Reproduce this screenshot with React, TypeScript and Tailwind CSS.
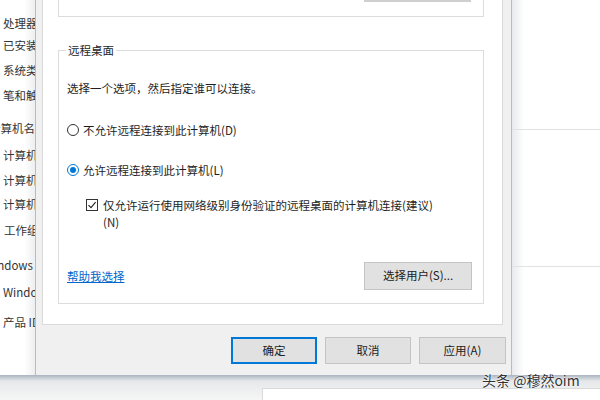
const font = { fontFamily: '"Noto Sans CJK SC", "Noto Sans", sans-serif' };

const sideLabels = [
  { text: "处理器", cls: "mt-[13px] ml-[3px]" },
  { text: "已安装的内存", cls: "mt-[2px] ml-[3px]" },
  { text: "系统类型", cls: "mt-[5px] ml-[3px]" },
  { text: "笔和触控", cls: "mt-[5px] ml-[3px]" },
  { text: "计算机名、域和工作组设置", cls: "mt-[13px] -ml-[11px]" },
  { text: "计算机名", cls: "mt-[7px] ml-[3px]" },
  { text: "计算机全名", cls: "mt-[5px] ml-[3px]" },
  { text: "计算机描述", cls: "mt-[4px] ml-[3px]" },
  { text: "工作组", cls: "mt-[6px] ml-[4px]" },
  { text: "Windows 激活", cls: "mt-[15px] -ml-[16px]" },
  { text: "Windows 已激活", cls: "mt-[7px] ml-[3px]" },
  { text: "产品 ID", cls: "mt-[10px] ml-[3px]" },
];

function Radio({ checked }: { checked?: boolean }) {
  return (
    <span
      className={
        checked
          ? "flex h-[12px] w-[12px] shrink-0 items-center justify-center rounded-full border border-[#0078d7] bg-white"
          : "flex h-[12px] w-[12px] shrink-0 items-center justify-center rounded-full border border-[#333] bg-white"
      }
    >
      {checked && <span className="h-[6px] w-[6px] rounded-full bg-[#0078d7]" />}
    </span>
  );
}

function Checkbox() {
  return (
    <span className="mt-[2px] flex h-[12px] w-[12px] shrink-0 items-center justify-center border border-[#333] bg-white">
      <svg width="10" height="10" viewBox="0 0 10 10">
        <path d="M1.5 5.2 L4 7.6 L8.6 2.2" fill="none" stroke="#222" strokeWidth="1.1" />
      </svg>
    </span>
  );
}

function DlgButton({ label, primary, className }: { label: string; primary?: boolean; className: string }) {
  return (
    <div
      className={
        (primary
          ? "border-2 border-[#0078d7] "
          : "border border-[#c4c4c4] ") +
        "flex items-center justify-center bg-[#e1e1e1] text-[11.5px] text-[#222] " +
        className
      }
    >
      {label}
    </div>
  );
}

export default function App() {
  return (
    <div className="relative h-[400px] w-[600px] overflow-hidden bg-white text-[#1e1e1e]" style={font}>
      <div className="flex h-[375px]">
        {/* window behind, left part */}
        <div className="flex w-[35px] shrink-0 flex-col overflow-hidden bg-gradient-to-r from-white from-70% to-[#eceef0] text-[11.5px] leading-[20px] text-[#333]">
          {sideLabels.map((l) => (
            <div key={l.text} className={"whitespace-nowrap " + l.cls}>
              {l.text}
            </div>
          ))}
        </div>

        {/* properties dialog */}
        <div className="flex w-[477px] shrink-0 flex-col border-x border-[#a7bfd9] bg-[#f0f0f0]">
          <div className="ml-[6px] mr-[8px] flex h-[325px] flex-col border-x border-b border-[#dadada] bg-white px-[15px] pr-[18px]">
            <div className="relative h-[17px] border-x border-b border-[#dcdcdc]">
              <div className="ml-[305px] h-[2px] w-[107px] bg-[#cfcfcf]" />
            </div>

            <div className="relative mt-[33px] flex h-[254px] flex-col border border-[#dcdcdc] pl-[8px] pr-[11px] text-[11.5px]">
              <span className="absolute -top-[9px] left-[7px] bg-white px-[2px] leading-[16px]">远程桌面</span>
              <div className="mt-[29px] leading-[16px]">选择一个选项，然后指定谁可以连接。</div>
              <div className="mt-[26px] flex items-center gap-[4px] leading-[16px]">
                <Radio />
                <span>不允许远程连接到此计算机(D)</span>
              </div>
              <div className="mt-[24px] flex items-center gap-[4px] leading-[16px]">
                <Radio checked />
                <span>允许远程连接到此计算机(L)</span>
              </div>
              <div className="ml-[19px] mt-[19px] flex items-start gap-[5px] leading-[17px]">
                <Checkbox />
                <span>
                  仅允许运行使用网络级别身份验证的远程桌面的计算机连接(建议)
                  <br />
                  (N)
                </span>
              </div>
              <div className="mt-[31px] flex items-center justify-between">
                <span className="text-[#0066cc] underline leading-[16px]">帮助我选择</span>
                <DlgButton label="选择用户(S)..." className="h-[28px] w-[108px] border-[#adadad]" />
              </div>
            </div>
          </div>

          <div className="flex flex-1 items-start justify-end gap-[8px] pr-[5px] pt-[12px]">
            <DlgButton label="确定" primary className="h-[27px] w-[86px]" />
            <DlgButton label="取消" className="h-[27px] w-[86px]" />
            <DlgButton label="应用(A)" className="h-[27px] w-[87px]" />
          </div>
        </div>

        {/* window behind, right part */}
        <div className="flex flex-1 flex-col bg-gradient-to-r from-[#e9eaee] via-white via-[14%] to-white">
          <div className="h-[130px] border-b border-[#e2e2e2]" />
          <div className="h-[137px] border-b border-[#e2e2e2]" />
        </div>
      </div>

      {/* strip under dialog */}
      <div className="flex h-[25px] flex-col bg-gradient-to-b from-[#aab4c0] via-[#e6e8ea] via-[24%] to-[#f6f6f6]">
        <div className="ml-[262px] mt-[13px] h-[12px] border-l border-t border-[#dadada] bg-white" />
      </div>

      <div
        className="absolute left-[482px] top-[371px] whitespace-nowrap text-[14px] leading-[18px] text-[#333]"
        style={{ textShadow: "0 0 2px #fff, 0 0 2px #fff" }}
      >
        头条 @穆然oim
      </div>
    </div>
  );
}
